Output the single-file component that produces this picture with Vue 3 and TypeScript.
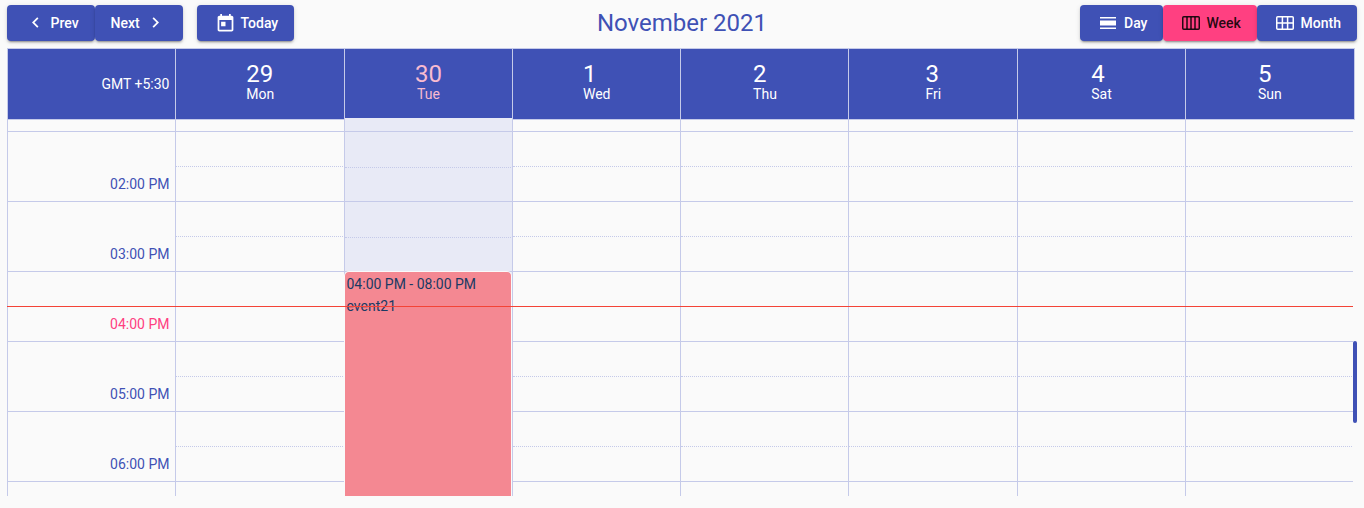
<script setup lang="ts">
interface Day { num: number; name: string; today?: boolean }

const days: Day[] = [
  { num: 29, name: 'Mon' },
  { num: 30, name: 'Tue', today: true },
  { num: 1, name: 'Wed' },
  { num: 2, name: 'Thu' },
  { num: 3, name: 'Fri' },
  { num: 4, name: 'Sat' },
  { num: 5, name: 'Sun' },
]
const hours: string[] = ['02:00 PM', '03:00 PM', '04:00 PM', '05:00 PM', '06:00 PM']
const currentHour = '04:00 PM'
</script>

<template>
  <div class="calendar">
    <header class="toolbar">
      <div class="group left">
        <button class="btn prev">
          <svg viewBox="0 0 24 24" width="21" height="21"><path d="M15.41 7.41 14 6l-6 6 6 6 1.41-1.41L10.83 12z" /></svg>
          <span>Prev</span>
        </button>
        <button class="btn next">
          <span>Next</span>
          <svg viewBox="0 0 24 24" width="21" height="21"><path d="M10 6 8.59 7.41 13.17 12l-4.58 4.59L10 18l6-6z" /></svg>
        </button>
        <button class="btn today">
          <svg viewBox="0 0 24 24" width="21" height="21"><path d="M19 3h-1V1h-2v2H8V1H6v2H5c-1.11 0-1.99.9-1.99 2L3 19c0 1.1.89 2 2 2h14c1.1 0 2-.9 2-2V5c0-1.1-.9-2-2-2zm0 16H5V8h14v11zM7 10h5v5H7z" /></svg>
          <span>Today</span>
        </button>
      </div>
      <h1>November 2021</h1>
      <div class="group right">
        <button class="btn day">
          <svg viewBox="0 0 16 12" width="16" height="12"><path d="M0 0h16v1.5H0zM0 3.5h16v5H0zM0 10.5h16V12H0z" /></svg>
          <span>Day</span>
        </button>
        <button class="btn week">
          <svg class="line" viewBox="0 0 18 14" width="18" height="14"><rect x=".75" y=".75" width="16.5" height="12.5" rx="1" /><path d="M5 1v12M9 1v12M13 1v12" /></svg>
          <span>Week</span>
        </button>
        <button class="btn month">
          <svg class="line" viewBox="0 0 18 14" width="18" height="14"><rect x=".75" y=".75" width="16.5" height="12.5" rx="1" /><path d="M6.4 1v12M11.6 1v12M1 7h16" /></svg>
          <span>Month</span>
        </button>
      </div>
    </header>

    <div class="head">
      <div class="zone">GMT +5:30</div>
      <div v-for="d in days" :key="d.num" class="day-head" :class="{ active: d.today }">
        <div class="label"><span class="num">{{ d.num }}</span><span class="name">{{ d.name }}</span></div>
      </div>
    </div>

    <div class="body">
      <div class="times">
        <div class="sliver"></div>
        <div v-for="h in hours" :key="h" class="hour" :class="{ now: h === currentHour }">{{ h }}</div>
      </div>
      <div v-for="d in days" :key="d.num" class="column" :class="{ active: d.today }">
        <div class="sliver"></div>
        <div v-for="h in hours" :key="h" class="slot"><div class="half"></div></div>
        <div v-if="d.today" class="event"><div>04:00 PM - 08:00 PM</div><div>event21</div></div>
      </div>
      <div class="now-line"></div>
      <div class="thumb"></div>
    </div>
  </div>
</template>

<style>
body { background: #fafafa; overflow: hidden; }
</style>

<style scoped>
* { box-sizing: border-box; }
.calendar { font-family: Roboto, sans-serif; font-size: 14px; color: #3f51b5; padding: 5px 7px 0; height: 508px; }
.toolbar { display: grid; grid-template-columns: 1fr auto 1fr; align-items: start; height: 43px; }
.group { display: flex; }
.right { justify-content: flex-end; }
h1 { margin: 0; font-size: 24px; font-weight: 400; line-height: 36px; }
.btn {
  display: flex; align-items: center; justify-content: flex-start; height: 36px; padding: 0; border: 0; border-radius: 4px;
  background: #3f51b5; color: #fff; font: 500 14px/36px Roboto, sans-serif;
  box-shadow: 0 3px 1px -2px rgba(0,0,0,.2), 0 2px 2px 0 rgba(0,0,0,.14), 0 1px 5px 0 rgba(0,0,0,.12);
}
.btn svg { fill: currentColor; flex: none; }
.btn svg.line { fill: none; stroke: currentColor; stroke-width: 1.5; }
.prev { width: 88px; padding-left: 17.5px; gap: 5px; }
.next { width: 88px; padding-left: 15.5px; gap: 5px; }
.prev svg, .next svg { position: relative; top: -.5px; }
.today { width: 97px; margin-left: 14px; padding-left: 17.5px; gap: 5px; }
.day { width: 83px; padding-left: 20px; gap: 8px; }
.week { width: 94px; padding-left: 19px; gap: 6.5px; background: #ff4081; color: rgba(0,0,0,.87); }
.month { width: 100px; padding-left: 19px; gap: 6.5px; }

.head { display: grid; grid-template-columns: repeat(7, 168.25px) 1fr; width: 1348px; height: 72px; border: 1px solid #c5cae9; border-left: 0; border-bottom: 0; }
.zone, .day-head { display: flex; align-items: center; background: #3f51b5; color: #fff; border-left: 1px solid #c5cae9; border-bottom: 1px solid #c5cae9; }
.zone { justify-content: flex-end; padding-right: 5.75px; }
.day-head { justify-content: center; padding: 0 0 4px .75px; }
.day-head.active { color: #f8bbd0; border-bottom: 0; height: 69px; padding-bottom: 3px; }
.day-head:last-child { padding-left: 0; }
.label { display: flex; flex-direction: column; }
.num { font-size: 24px; line-height: 24px; }
.name { line-height: 16px; text-align: center; }

.body { position: relative; display: grid; grid-template-columns: repeat(8, 168.25px); width: 1346px; height: 376px; }
.times, .column { height: 376px; overflow: hidden; border-left: 1px solid #c5cae9; }
.sliver { height: 12px; border-bottom: 1px solid #c5cae9; }
.hour { height: 70px; padding: 44px 5.75px 0 0; line-height: 16px; text-align: right; border-bottom: 1px solid #c5cae9; }
.hour.now { color: #ff4081; }
.slot { height: 70px; border-bottom: 1px solid #c5cae9; }
.half { height: 35px; margin-right: 1px; border-bottom: 1px dotted #c5cae9; }
.column { position: relative; }
.column.active { background: #e8eaf6; margin-top: -2px; height: 378px; overflow: visible; }
.active .sliver { height: 14px; }
.active .half { height: 36px; }
.event {
  position: absolute; left: -1px; right: 0; top: 153px; height: 225px; padding: 1px 2px; overflow: hidden;
  background: #f48892; color: #1a3a63; line-height: 22px; border: 1px solid #fafafa; border-bottom: 0; border-radius: 5px 5px 0 0;
}
.now-line { position: absolute; left: 0; right: 0; top: 186px; height: 1px; background: #f44336; }
.thumb { position: absolute; left: 1346px; top: 221px; width: 4px; height: 82px; border-radius: 2px; background: #3f51b5; }
</style>
